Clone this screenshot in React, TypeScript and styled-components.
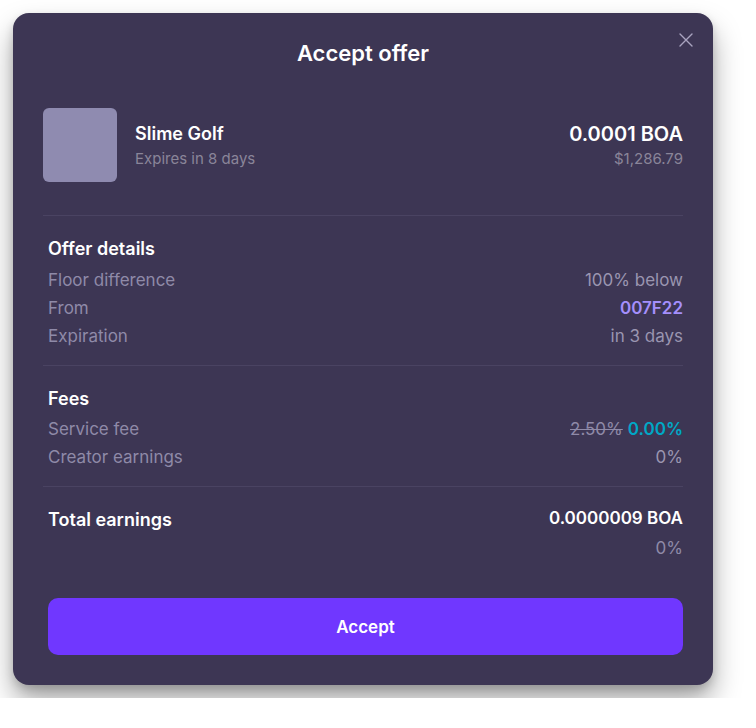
import React from "react";
import styled, { createGlobalStyle } from "styled-components";

const Global = createGlobalStyle`
  html, body { margin: 0; padding: 0; background: #ffffff; }
  body { font-family: Inter, "Noto Sans", sans-serif; -webkit-font-smoothing: antialiased; }
  * { box-sizing: border-box; }
`;

const Page = styled.div`
  padding: 13px;
`;

const Modal = styled.div`
  position: relative;
  width: 700px;
  background: #3d3654;
  border-radius: 16px;
  padding: 26px 30px 30px;
  box-shadow: 0 16px 28px rgba(0, 0, 0, 0.35), 0 4px 8px rgba(0, 0, 0, 0.15);
  display: flex;
  flex-direction: column;
`;

const Title = styled.h2`
  margin: 0;
  text-align: center;
  color: #ffffff;
  font-size: 22px;
  line-height: 28px;
  font-weight: 600;
`;

const Close = styled.button`
  position: absolute;
  top: 20px;
  right: 20px;
  width: 14px;
  height: 14px;
  padding: 0;
  border: 0;
  background: none;
  cursor: pointer;
  display: flex;
`;

const ItemRow = styled.div`
  margin-top: 41px;
  display: flex;
  align-items: center;
  gap: 18px;
`;

const Thumb = styled.div`
  width: 74px;
  height: 74px;
  border-radius: 6px;
  background: #8f8bb0;
  flex-shrink: 0;
`;

const Stack = styled.div<{ $align?: string }>`
  display: flex;
  flex-direction: column;
  align-items: ${(p) => p.$align || "flex-start"};
  gap: 3px;
`;

const ItemName = styled.div`
  color: #ffffff;
  font-size: 18px;
  line-height: 24px;
  font-weight: 600;
`;

const SubText = styled.div`
  color: #8a8599;
  font-size: 15px;
  line-height: 20px;
`;

const Price = styled.div`
  color: #ffffff;
  font-size: 20px;
  line-height: 24px;
  font-weight: 600;
`;

const Spacer = styled.div`
  flex: 1;
`;

const Divider = styled.hr`
  margin: 33px 0 0;
  border: 0;
  height: 1px;
  background: #4a4362;
`;

const Section = styled.section<{ $last?: boolean }>`
  padding: 21px 0 ${(p) => (p.$last ? "0" : "15px")} 5px;
  display: flex;
  flex-direction: column;
`;

const SectionDivider = styled.hr`
  margin: 0;
  border: 0;
  height: 1px;
  background: #4a4362;
`;

const Heading = styled.h3<{ $tight?: boolean }>`
  margin: 0 0 ${(p) => (p.$tight ? "4px" : "5px")};
  color: #ffffff;
  font-size: 18px;
  line-height: 24px;
  font-weight: 600;
`;

const Row = styled.div`
  display: flex;
  justify-content: space-between;
  align-items: center;
  height: 28px;
  font-size: 17px;
  color: #8f8aa8;
`;

const Value = styled.span<{ $tone?: "accent" | "teal" | "white" | "muted" }>`
  color: ${(p) =>
    p.$tone === "accent"
      ? "#a48ffc"
      : p.$tone === "teal"
      ? "#00a8c6"
      : p.$tone === "white"
      ? "#ffffff"
      : "#9a95b0"};
  font-weight: ${(p) => (p.$tone && p.$tone !== "muted" ? 600 : 400)};
`;

const Strike = styled.span`
  text-decoration: line-through;
  color: #8f8aa8;
  margin-right: 5px;
`;

const TotalRow = styled.div`
  display: flex;
  justify-content: space-between;
  align-items: center;
  height: 24px;
  margin-top: -1px;
`;

const TotalLabel = styled.span`
  color: #ffffff;
  font-size: 18px;
  font-weight: 600;
`;

const TotalValue = styled.span`
  color: #ffffff;
  font-size: 17px;
  font-weight: 600;
  margin-top: -2px;
`;

const PercentRow = styled.div`
  margin-top: 3px;
  height: 28px;
  display: flex;
  justify-content: flex-end;
  align-items: center;
  color: #8f8aa8;
  font-size: 17px;
`;

const AcceptButton = styled.button`
  margin: 36px 0 0 5px;
  height: 57px;
  border: 0;
  border-radius: 10px;
  background: #7037ff;
  color: #ffffff;
  font-family: Inter, "Noto Sans", sans-serif;
  font-size: 17px;
  font-weight: 600;
  cursor: pointer;
`;

export default function App() {
  return (
    <Page>
      <Global />
      <Modal>
        <Title>Accept offer</Title>
        <Close aria-label="Close">
          <svg width="14" height="14" viewBox="0 0 14 14">
            <path d="M1 1 L13 13 M13 1 L1 13" stroke="#a9a4c0" strokeWidth="1.4" strokeLinecap="round" />
          </svg>
        </Close>

        <ItemRow>
          <Thumb />
          <Stack>
            <ItemName>Slime Golf</ItemName>
            <SubText>Expires in 8 days</SubText>
          </Stack>
          <Spacer />
          <Stack $align="flex-end">
            <Price>0.0001 BOA</Price>
            <SubText>$1,286.79</SubText>
          </Stack>
        </ItemRow>

        <Divider />

        <Section>
          <Heading>Offer details</Heading>
          <Row>
            <span>Floor difference</span>
            <Value>100% below</Value>
          </Row>
          <Row>
            <span>From</span>
            <Value $tone="accent">007F22</Value>
          </Row>
          <Row>
            <span>Expiration</span>
            <Value>in 3 days</Value>
          </Row>
        </Section>

        <SectionDivider />

        <Section>
          <Heading $tight>Fees</Heading>
          <Row>
            <span>Service fee</span>
            <span>
              <Strike>2.50%</Strike>
              <Value $tone="teal">0.00%</Value>
            </span>
          </Row>
          <Row>
            <span>Creator earnings</span>
            <Value>0%</Value>
          </Row>
        </Section>

        <SectionDivider />

        <Section $last>
          <TotalRow>
            <TotalLabel>Total earnings</TotalLabel>
            <TotalValue>0.0000009 BOA</TotalValue>
          </TotalRow>
          <PercentRow>0%</PercentRow>
        </Section>

        <AcceptButton>Accept</AcceptButton>
      </Modal>
    </Page>
  );
}
